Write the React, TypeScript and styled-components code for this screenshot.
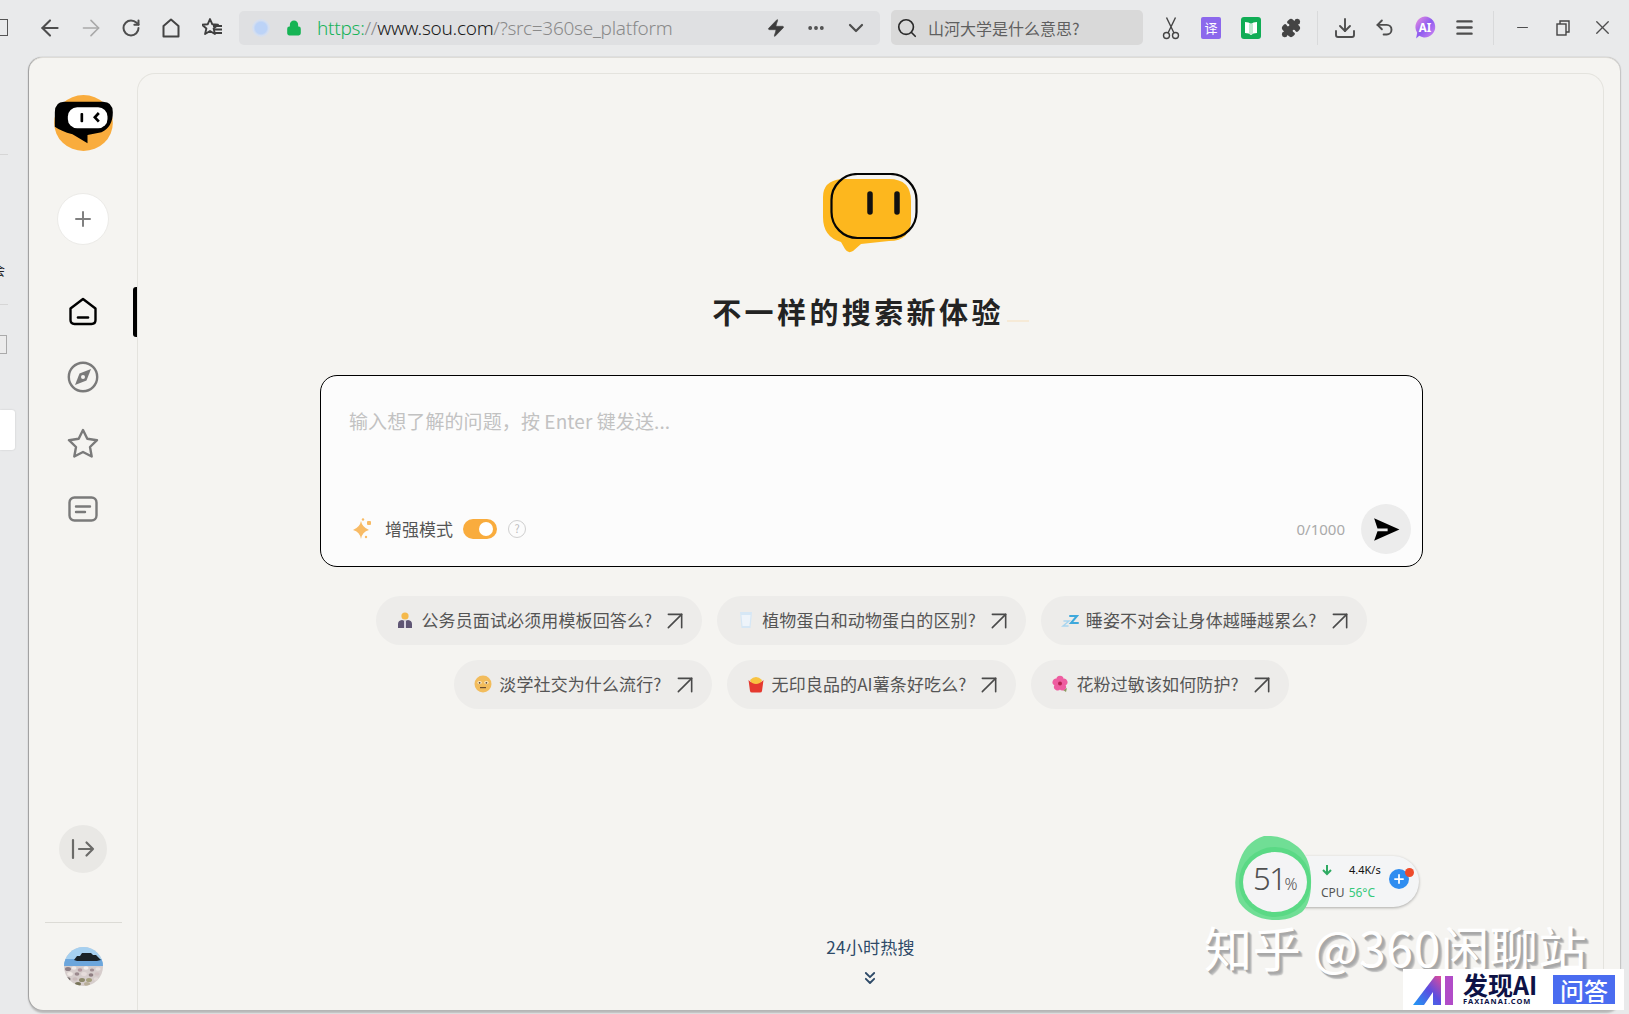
import React from "react";
import styled, { createGlobalStyle } from "styled-components";
import {
  ArrowLeft, ArrowRight, RotateCw, Download, Undo2, Menu, Minus, X, ChevronDown,
  MoreHorizontal, Search, ArrowUpRight, Plus, ChevronsDown, Lock, Zap, Puzzle,
} from "lucide-react";

const CJK = `"Noto Sans CJK SC", "Noto Sans", sans-serif`;

const Global = createGlobalStyle`
  html, body { margin: 0; padding: 0; height: 1014px; overflow: hidden; background: #e9eaeb; }
  #root { height: 1014px; }
  * { box-sizing: border-box; }
  body { font-family: ${CJK}; }
`;

const Page = styled.div`
  position: relative;
  width: 1629px;
  height: 1014px;
  display: flex;
  flex-direction: column;
  background: #e9eaeb;
  overflow: hidden;
`;

/* Toolbar */
const Toolbar = styled.header`
  height: 57px;
  display: flex;
  align-items: center;
  flex: none;
  padding-bottom: 2px;
`;
const CropEdge = styled.div`
  width: 30px;
  flex: none;
  display: flex;
  &::before {
    content: "";
    width: 7px;
    height: 15px;
    border: 1px solid #555;
    border-left: none;
  }
`;
const ToolIcon = styled.div<{ $c?: string }>`
  width: 40px;
  height: 40px;
  flex: none;
  display: flex;
  align-items: center;
  justify-content: center;
  color: ${(p) => p.$c || "#4e4e4e"};
`;
const NavIcon = styled(ToolIcon)`
  width: 40.4px;
`;
const AddressBar = styled.div`
  width: 641px;
  height: 34px;
  margin-left: 7px;
  flex: none;
  border-radius: 5px;
  background: #dfe0e2;
  display: flex;
  align-items: center;
  padding-left: 13px;
`;
const ShieldDot = styled.div`
  width: 18px;
  height: 18px;
  border-radius: 50%;
  background: radial-gradient(circle, #bcd3f7 0 45%, #d5dff0 60%, #dfe0e2 100%);
`;
const LockWrap = styled.div`
  margin-left: 16px;
  width: 16px;
  display: flex;
  color: #16b455;
`;
const Url = styled.div`
  margin-left: 15px;
  width: 398px;
  font-family: "Noto Sans", sans-serif;
  font-size: 19px;
  font-weight: 300;
  letter-spacing: -0.27px;
  white-space: nowrap;
  color: #8a8a8a;
  line-height: 34px;
`;
const UrlScheme = styled.span`
  color: #18b35a;
`;
const UrlHost = styled.span`
  color: #1a1a1a;
`;
const AddressTools = styled.div`
  display: flex;
  align-items: center;
  margin-left: auto;
  margin-right: 4px;
`;
const SearchBox = styled.div`
  width: 252px;
  height: 35px;
  margin-left: 11px;
  flex: none;
  border-radius: 5px;
  background: #d9d9d9;
  display: flex;
  align-items: center;
  padding-left: 5px;
  gap: 10px;
  color: #2a2a2a;
`;
const SearchText = styled.span`
  font-size: 16px;
  color: #5f5f5f;
  white-space: nowrap;
`;
const ToolGroup = styled.div`
  margin-left: 8px;
  display: flex;
  align-items: center;
`;
const ToolSep = styled.div<{ $w: number }>`
  width: ${(p) => p.$w}px;
  height: 34px;
  flex: none;
  display: flex;
  justify-content: center;
  &::before {
    content: "";
    width: 1px;
    background: #d9dadb;
  }
`;

/* Body */
const Workspace = styled.div`
  display: flex;
  flex: none;
  height: 953px;
`;
const Gutter = styled.div`
  width: 29px;
  flex: none;
  display: flex;
  flex-direction: column;
  overflow: hidden;
`;
const GutterRule = styled.div<{ $top: number }>`
  width: 8px;
  height: 1px;
  background: #d6d6d6;
  margin-top: ${(p) => p.$top}px;
`;
const GutterGlyph = styled.div`
  margin-top: 106px;
  margin-left: -8px;
  font-size: 13px;
  line-height: 18px;
  color: #222;
`;
const GutterBox = styled.div`
  margin-top: 30px;
  width: 7px;
  height: 19px;
  border: 1px solid #aaa;
  border-left: none;
  background: #ececec;
`;
const GutterPanel = styled.div`
  margin-top: 56px;
  width: 15px;
  height: 40px;
  background: #fff;
  border-radius: 0 3px 3px 0;
  box-shadow: 0 0 2px rgba(0, 0, 0, 0.15);
`;
const Card = styled.main`
  width: 1591px;
  height: 953px;
  flex: none;
  display: flex;
  background: #f5f4f1;
  border-radius: 14px;
  border-top: 1px solid #dedcd7;
  box-shadow: -1px 0 1px #9c9c9c, 1px 0 1px #c4c4c4, 0 3px 2px #b8b8b8;
`;
const Sidebar = styled.aside`
  width: 108px;
  flex: none;
  display: flex;
  flex-direction: column;
  align-items: center;
  padding: 37px 0 24px;
`;
const AddButton = styled.button`
  margin-top: 42px;
  width: 52px;
  height: 52px;
  border-radius: 50%;
  background: #fff;
  border: 1px solid #ecebe8;
  color: #808080;
  padding: 0;
  display: flex;
  align-items: center;
  justify-content: center;
`;
const NavList = styled.nav`
  margin-top: 42px;
  width: 100%;
  display: flex;
  flex-direction: column;
  gap: 16px;
`;
const NavItem = styled.div<{ $active?: boolean }>`
  position: relative;
  height: 50px;
  padding-bottom: 2px;
  display: flex;
  align-items: center;
  justify-content: center;
  color: ${(p) => (p.$active ? "#000" : "#7a7a7a")};
  ${(p) =>
    p.$active
      ? `&::after { content: ""; position: absolute; right: 0; top: 0; width: 4px; height: 50px; background: #000; border-radius: 3px 0 0 3px; }`
      : ""}
`;
const CollapseButton = styled.button`
  margin-top: auto;
  width: 48px;
  height: 48px;
  border-radius: 50%;
  border: none;
  padding: 0;
  background: #e9e8e5;
  display: flex;
  align-items: center;
  justify-content: center;
`;
const SideRule = styled.div`
  margin-top: 49px;
  width: 77px;
  height: 1px;
  background: #dcdbd6;
`;
const Avatar = styled.div`
  margin-top: 24px;
  width: 39px;
  height: 39px;
  border-radius: 50%;
  overflow: hidden;
  display: flex;
`;
const Panel = styled.section`
  margin: 15px 16px 0 0;
  flex: 1;
  display: flex;
  flex-direction: column;
  align-items: center;
  padding: 99px 0 22px;
  border: 1px solid #e4e3de;
  border-bottom: none;
  border-radius: 18px 18px 0 0;
  background: #f5f4f1;
`;
const Title = styled.h1`
  margin: 38px 0 0 0;
  height: 40px;
  display: flex;
  align-items: center;
  font-size: 29px;
  font-weight: 700;
  letter-spacing: 3.4px;
  color: #232323;
  white-space: nowrap;
`;
const TypingCursor = styled.span`
  width: 22px;
  height: 2px;
  margin: 20px 0 0 3px;
  background: #f6ead7;
`;
const InputCard = styled.div`
  margin: 44px 0 0 2px;
  width: 1103px;
  height: 192px;
  flex: none;
  border: 1px solid #000;
  border-radius: 17px;
  background: #fcfcfc;
  display: flex;
  flex-direction: column;
  justify-content: space-between;
  padding: 32px 11px 12px 28px;
`;
const Placeholder = styled.div`
  font-size: 19px;
  line-height: 26px;
  color: #c2c2c2;
  letter-spacing: 0.1px;
`;
const InputFooter = styled.div`
  display: flex;
  align-items: center;
`;
const SparkleWrap = styled.span`
  display: flex;
  margin-left: 3px;
`;
const ModeLabel = styled.span`
  margin: 0 0 2px 11px;
  font-size: 17px;
  color: #555;
  white-space: nowrap;
`;
const Toggle = styled.div`
  margin-left: 10px;
  width: 34px;
  height: 20px;
  border-radius: 10px;
  background: #f9ac3d;
  display: flex;
  align-items: center;
  justify-content: flex-end;
  padding-right: 4px;
  &::after {
    content: "";
    width: 14px;
    height: 14px;
    border-radius: 50%;
    background: #fff;
  }
`;
const HelpMark = styled.div`
  margin-left: 11px;
  width: 18px;
  height: 18px;
  border-radius: 50%;
  border: 1.5px solid #cfcfcf;
  color: #bdbdbd;
  font-size: 11px;
  line-height: 15px;
  text-align: center;
`;
const Counter = styled.span`
  margin-left: auto;
  font-family: "Noto Sans", sans-serif;
  font-size: 15px;
  color: #aaa;
`;
const SendButton = styled.button`
  margin-left: 16px;
  width: 50px;
  height: 50px;
  border-radius: 50%;
  border: none;
  padding: 0;
  background: #ececec;
  display: flex;
  align-items: center;
  justify-content: center;
`;
const ChipGrid = styled.div`
  margin: 29px 0 0 2px;
  width: 1010px;
  display: flex;
  flex-wrap: wrap;
  justify-content: center;
  gap: 15px;
`;
const Chip = styled.div`
  height: 49px;
  padding: 0 11px 2px 20px;
  border-radius: 25px;
  background: #edecea;
  display: flex;
  align-items: center;
  font-size: 17px;
  letter-spacing: 0.12px;
  color: #555;
  white-space: nowrap;
`;
const ChipEmoji = styled.span`
  width: 18px;
  height: 18px;
  flex: none;
  display: flex;
  margin-right: 7px;
`;
const ChipArrow = styled.span`
  margin: 2px 0 0 7px;
  display: flex;
  color: #4a4a4a;
`;
const HotLink = styled.div`
  margin-top: auto;
  display: flex;
  flex-direction: column;
  align-items: center;
  color: #2e4a68;
`;
const HotText = styled.span`
  font-size: 17px;
  line-height: 24px;
  letter-spacing: 0.3px;
`;
const HotChevron = styled.span`
  display: flex;
  margin-top: 9px;
`;

/* Floating overlays */
const Monitor = styled.div`
  position: absolute;
  left: 1234px;
  top: 836px;
  width: 185px;
  height: 84px;
`;
const MonitorPill = styled.div`
  position: absolute;
  left: 46px;
  top: 20px;
  width: 139px;
  height: 51px;
  border-radius: 26px;
  background: #f4f5f6;
  box-shadow: 0 1px 3px rgba(0, 0, 0, 0.3);
  padding: 2px 0 0 41px;
`;
const MonitorRow = styled.div`
  display: flex;
  align-items: center;
  height: 23px;
`;
const Speed = styled.span`
  margin-left: 16px;
  font-family: "Noto Sans", sans-serif;
  font-size: 11px;
  color: #111;
`;
const CpuLabel = styled.span`
  font-family: "Noto Sans", sans-serif;
  font-size: 12px;
  color: #555;
`;
const CpuValue = styled.span`
  margin-left: 4px;
  font-family: "Noto Sans", sans-serif;
  font-size: 12px;
  color: #35c97a;
`;
const BoostButton = styled.div`
  position: absolute;
  left: 155px;
  top: 33px;
  width: 20px;
  height: 20px;
  border-radius: 50%;
  background: #2f8df0;
  color: #fff;
  display: flex;
  align-items: center;
  justify-content: center;
  &::after {
    content: "";
    position: absolute;
    left: 16px;
    top: -1px;
    width: 9px;
    height: 9px;
    border-radius: 50%;
    background: #ee4b2b;
  }
`;
const Gauge = styled.div`
  position: absolute;
  left: 0;
  top: 0;
  width: 78px;
  height: 84px;
  display: flex;
`;
const GaugeText = styled.div`
  position: absolute;
  left: 19px;
  top: 24px;
  font-family: "Noto Sans", sans-serif;
  font-size: 31px;
  font-weight: 300;
  letter-spacing: -1.4px;
  line-height: 36px;
  color: #505050;
  white-space: nowrap;
`;
const GaugeUnit = styled.span`
  font-size: 16px;
  letter-spacing: 0;
  margin-left: -1px;
`;
const Watermark = styled.div`
  position: absolute;
  left: 1204px;
  top: 922px;
  font-size: 48px;
  line-height: 48px;
  letter-spacing: 0.7px;
  color: #fff;
  text-shadow: 2px 2px 0 #a8a8a8, 3px 3px 1px #b0b0b0, 4px 4px 1px #c4c4c4;
  white-space: nowrap;
`;
const BrandBadge = styled.div`
  position: absolute;
  left: 1403px;
  top: 969px;
  width: 221px;
  height: 41px;
  background: #fff;
  display: flex;
  align-items: center;
  padding-left: 10px;
`;
const BrandName = styled.div`
  margin: -2px 0 0 9px;
  width: 78px;
  display: flex;
  flex-direction: column;
  color: #0d1246;
`;
const BrandTitle = styled.span`
  font-size: 25px;
  font-weight: 700;
  line-height: 25px;
  white-space: nowrap;
`;
const BrandDomain = styled.span`
  font-family: "Noto Sans", sans-serif;
  font-size: 7.5px;
  font-weight: 700;
  line-height: 9px;
  letter-spacing: 1.05px;
  white-space: nowrap;
`;
const BrandTag = styled.div`
  margin-left: 12px;
  width: 62px;
  height: 29px;
  background: #4a6cf0;
  color: #fff;
  font-size: 24px;
  line-height: 29px;
  font-weight: 500;
  text-align: center;
  white-space: nowrap;
`;

const BotLogo = () => (
  <svg width="59" height="56" viewBox="0 0 176 168">
    <ellipse cx="88" cy="84" rx="88" ry="84" fill="#f9ac3d" />
    <path d="M30 20H146Q176 20 176 52Q176 96 142 112L100 120V145L55 118Q20 108 2 95V52Q2 20 30 20Z" fill="#000" />
    <rect x="41" y="37" width="119" height="63" rx="28" fill="#fff" />
    <rect x="79" y="54" width="8" height="28" rx="3" fill="#000" />
    <path d="M134 54L122 67L134 80" fill="none" stroke="#000" strokeWidth="8" />
  </svg>
);

const HomeIcon = () => (
  <svg width="30" height="30" viewBox="0 0 30 30" fill="none" stroke="currentColor" strokeWidth="2.4" strokeLinejoin="round" strokeLinecap="round">
    <path d="M2.5 12.5L15 3L27.5 12.5V24Q27.5 28 23.5 28H6.5Q2.5 28 2.5 24Z" />
    <path d="M10 21.5H20" strokeWidth="2.6" />
  </svg>
);
const CompassIcon = () => (
  <svg width="32" height="32" viewBox="0 0 32 32">
    <circle cx="16" cy="16" r="14.2" fill="none" stroke="currentColor" strokeWidth="2.4" />
    <path d="M24 8L19.5 19.5L8 24L12.5 12.5Z" fill="currentColor" />
    <circle cx="16" cy="16" r="2" fill="#f5f4f1" />
  </svg>
);
const StarIcon = () => (
  <svg width="32" height="30" viewBox="0 0 32 30" fill="none" stroke="currentColor" strokeWidth="2.4" strokeLinejoin="round">
    <path d="M16 2L20.3 10.8L30 12.2L23 19L24.7 28.5L16 24L7.3 28.5L9 19L2 12.2L11.7 10.8Z" />
  </svg>
);
const NoteIcon = () => (
  <svg width="30" height="26" viewBox="0 0 30 26" fill="none" stroke="currentColor" strokeWidth="2.4" strokeLinecap="round">
    <rect x="1.5" y="1.5" width="27" height="23" rx="5" />
    <path d="M8 10.5H22M8 16H17" />
  </svg>
);
const CollapseIcon = () => (
  <svg width="24" height="22" viewBox="0 0 24 22" fill="none" stroke="#6b6b68" strokeWidth="2.2" strokeLinecap="round" strokeLinejoin="round">
    <path d="M2 2V20M8 11H22M15.5 4.5L22 11L15.5 17.5" />
  </svg>
);
const pebbles: [number, number, number, string][] = [
  [4, 22, 3, "#8e7f84"], [10, 21, 2.5, "#efe9e6"], [16, 23, 2.4, "#b39aa0"], [22, 21, 2.6, "#f2eeec"],
  [28, 23, 2.2, "#a08e92"], [34, 22, 2.6, "#e9e1de"], [6, 27, 2.8, "#efe8e4"], [13, 27, 2.4, "#9b8a8e"],
  [20, 27, 2.8, "#e6dcdb"], [27, 28, 2.4, "#8f7e82"], [33, 27, 2.6, "#d2c2c2"], [4, 32, 2.6, "#77706e"],
  [11, 32, 2.6, "#cbbcbc"], [18, 33, 3, "#8e8a6c"], [25, 33, 3, "#a5a07e"], [32, 32, 2.4, "#e3dad8"],
  [14, 37, 3, "#777458"], [23, 37, 3, "#b8ae98"],
];
const AvatarArt = () => (
  <svg width="39" height="39" viewBox="0 0 39 39">
    <rect width="39" height="39" fill="#d6cdcc" />
    <rect width="39" height="19" fill="#a6d0f0" />
    <rect y="12" width="39" height="7" fill="#6ca6dc" />
    <path d="M10 13L13 9H16L18 6H27L29 8H32L37 13L33 14H13Z" fill="#1b2328" />
    {pebbles.map(([x, y, r, c]) => (
      <ellipse key={`${x}-${y}`} cx={x} cy={y} rx={r} ry={r * 0.7} fill={c} />
    ))}
  </svg>
);
const Mascot = () => (
  <svg width="95" height="80" viewBox="0 0 95 80">
    <path d="M18 6H66Q88 6 88 28V46Q88 68 66 68L38 71L30 78Q25 81 22 76L18 69Q0 64 0 44V24Q0 8 18 6Z" fill="#fdb71e" />
    <rect x="8.5" y="1" width="85" height="64" rx="26" fill="none" stroke="#050505" strokeWidth="2.2" />
    <path d="M47 21V39M74 21V39" stroke="#111" strokeWidth="5.5" strokeLinecap="round" />
  </svg>
);
const Sparkle = () => (
  <svg width="22" height="22" viewBox="0 0 22 22" fill="#f8bb65">
    <path d="M9 3Q10 9 17 12Q10 14 9 21Q8 14 1 12Q8 9 9 3Z" />
    <rect x="15" y="3" width="4" height="4" rx="1" />
    <circle cx="11" cy="1.5" r="1.2" />
    <circle cx="14" cy="19" r="1.2" />
  </svg>
);
const SendIcon = () => (
  <svg width="27" height="25" viewBox="0 0 24 22">
    <path d="M1 1L23.5 11L1 21L4 12.5H13V10H4Z" fill="#000" />
  </svg>
);
const CutIcon = () => (
  <svg width="18" height="24" viewBox="0 0 18 24" fill="none" stroke="#444" strokeWidth="1.4">
    <circle cx="4.5" cy="19.5" r="3" />
    <circle cx="13.5" cy="19.5" r="3" />
    <path d="M6 17L13.5 1.5M12 17L4.5 1.5" />
  </svg>
);
const TranslateIcon = () => (
  <svg width="20" height="22" viewBox="0 0 20 22">
    <rect width="20" height="22" rx="2" fill="#8c68ec" />
    <text x="10" y="16" fontSize="13" textAnchor="middle" fill="#fff" fontFamily={CJK}>译</text>
  </svg>
);
const BookIcon = () => (
  <svg width="20" height="22" viewBox="0 0 20 22">
    <rect width="20" height="22" rx="3" fill="#10ad55" />
    <path d="M4 5Q8 5 10 7Q12 5 16 5V16Q12 16 10 18Q8 16 4 16Z" fill="#fff" />
    <path d="M8 6.5H12V17H8Z" fill="#bfe9d0" />
  </svg>
);
const AiBubble = () => (
  <svg width="22" height="23" viewBox="0 0 21 22">
    <defs>
      <linearGradient id="aib" x1="0" y1="0" x2="1" y2="1">
        <stop offset="0" stopColor="#f090e0" />
        <stop offset="0.5" stopColor="#8d5cf0" />
        <stop offset="1" stopColor="#d78bf0" />
      </linearGradient>
    </defs>
    <path d="M10.5 0.5A10 10 0 1 1 5 19L2 21.5L3 16A10 10 0 0 1 10.5 0.5Z" fill="url(#aib)" />
    <text x="10.5" y="15" fontSize="11" fontWeight="700" textAnchor="middle" fill="#fff" fontFamily='"Noto Sans", sans-serif'>AI</text>
  </svg>
);
const StarList = () => (
  <svg width="20" height="20" viewBox="0 0 20 20" fill="#3f3f3f">
    <path d="M8 1L10.2 6.2L16 6.7L11.6 10.4L12.9 16L8 13L3.1 16L4.4 10.4L0 6.7L5.8 6.2Z" fill="none" stroke="#3f3f3f" strokeWidth="1.9" strokeLinejoin="round" />
    <rect x="11" y="7" width="9" height="2" />
    <rect x="12" y="10.5" width="8" height="2" />
    <rect x="13" y="14" width="7" height="2" />
  </svg>
);
const HomeOutline = () => (
  <svg width="18" height="20" viewBox="0 0 18 20" fill="none" stroke="#444" strokeWidth="2" strokeLinejoin="round">
    <path d="M1.5 8L9 1.5L16.5 8V18.5H1.5Z" />
  </svg>
);
const Restore = () => (
  <svg width="14" height="16" viewBox="0 0 14 16" fill="none" stroke="#444" strokeWidth="1.4">
    <rect x="1" y="4" width="9" height="11" />
    <path d="M4 4V1H13V12H10" />
  </svg>
);
const PersonEmoji = () => (
  <svg viewBox="0 0 18 18" width="18" height="18">
    <circle cx="9" cy="5" r="3.6" fill="#f5b94b" />
    <path d="M2 17V13Q2 9.5 6 9L9 10L12 9Q16 9.5 16 13V17Z" fill="#5f5674" />
    <path d="M8 10H10V17H8Z" fill="#d8d4e2" />
  </svg>
);
const GlassEmoji = () => (
  <svg viewBox="0 0 18 18" width="18" height="18">
    <path d="M3 1H15L13.5 17H4.5Z" fill="#d6e7f5" />
    <path d="M4.5 4H13.5L12.5 15H5.5Z" fill="#eef4fa" />
  </svg>
);
const ZzzEmoji = () => (
  <svg viewBox="0 0 18 18" width="18" height="18" fill="none" strokeLinecap="round">
    <path d="M9 5H16L10 12H17" stroke="#3fa9dc" strokeWidth="2" />
    <path d="M3 10H8L2 15H7" stroke="#a9d5ef" strokeWidth="1.5" />
  </svg>
);
const FaceEmoji = () => (
  <svg viewBox="0 0 18 18" width="18" height="18">
    <circle cx="9" cy="9" r="8.5" fill="#f2bc5c" />
    <ellipse cx="5.6" cy="7.6" rx="2.2" ry="1.6" fill="#fbe8c0" />
    <ellipse cx="12.4" cy="7.6" rx="2.2" ry="1.6" fill="#fbe8c0" />
    <circle cx="5.6" cy="7.8" r="0.9" fill="#5a4330" />
    <circle cx="12.4" cy="7.8" r="0.9" fill="#5a4330" />
    <rect x="6" y="12" width="6" height="1.2" fill="#6b4d2e" />
  </svg>
);
const FriesEmoji = () => (
  <svg viewBox="0 0 18 18" width="18" height="18">
    <path d="M3 5Q9 -1 15 5L13.5 9H4.5Z" fill="#f8c341" />
    <path d="M1.5 5Q9 13 16.5 5L15 16Q14.8 17.5 13 17.5H5Q3.2 17.5 3 16Z" fill="#e5392f" />
  </svg>
);
const FlowerEmoji = () => (
  <svg viewBox="0 0 18 18" width="18" height="18">
    <path d="M12 15L16 13L15 17Z" fill="#8c9a63" />
    {[0, 72, 144, 216, 288].map((a) => (
      <circle key={a} cx="9" cy="4.4" r="3.6" fill="#ee5da0" transform={`rotate(${a} 9 8.5)`} />
    ))}
    <circle cx="9" cy="8.5" r="2" fill="#b5224f" />
  </svg>
);
const GaugeArt = () => (
  <svg width="78" height="84" viewBox="0 0 78 84">
    <path d="M30 0Q48 -1 60 8Q76 18 77 42Q78 66 68 76Q56 85 38 84Q16 82 5 66Q-2 48 4 30Q10 6 30 0Z" fill="#70de95" />
    <ellipse cx="41" cy="46" rx="36" ry="35" fill="#5ad985" />
    <ellipse cx="41" cy="46" rx="32" ry="30" fill="#f4f4f5" />
  </svg>
);
const AiMark = () => (
  <svg width="41" height="32" viewBox="0 0 41 32">
    <defs>
      <linearGradient id="aim" x1="0" y1="1" x2="1" y2="0">
        <stop offset="0" stopColor="#1e9bf5" />
        <stop offset="0.55" stopColor="#5c4ce0" />
        <stop offset="1" stopColor="#e04b9a" />
      </linearGradient>
    </defs>
    <path d="M0 31L22 2H28V31H20V18L11 31Z" fill="url(#aim)" />
    <rect x="32" y="2" width="8" height="29" fill="#b14cc8" />
  </svg>
);

const chips = [
  { e: <PersonEmoji />, t: "公务员面试必须用模板回答么?" },
  { e: <GlassEmoji />, t: "植物蛋白和动物蛋白的区别?" },
  { e: <ZzzEmoji />, t: "睡姿不对会让身体越睡越累么?" },
  { e: <FaceEmoji />, t: "淡学社交为什么流行?" },
  { e: <FriesEmoji />, t: "无印良品的AI薯条好吃么?" },
  { e: <FlowerEmoji />, t: "花粉过敏该如何防护?" },
];

export default function App() {
  return (
    <Page>
      <Global />
      <Toolbar>
        <CropEdge />
        <NavIcon><ArrowLeft size={26} strokeWidth={1.9} /></NavIcon>
        <NavIcon $c="#a9a9a9"><ArrowRight size={26} strokeWidth={1.5} /></NavIcon>
        <NavIcon><RotateCw size={20} strokeWidth={2.4} /></NavIcon>
        <NavIcon><HomeOutline /></NavIcon>
        <NavIcon><StarList /></NavIcon>
        <AddressBar>
          <ShieldDot />
          <LockWrap><Lock size={16} fill="currentColor" strokeWidth={2.4} /></LockWrap>
          <Url>
            <UrlScheme>https:</UrlScheme>//<UrlHost>www.sou.com</UrlHost>/?src=360se_platform
          </Url>
          <AddressTools>
            <ToolIcon><Zap size={20} fill="#3c3c3c" strokeWidth={1} /></ToolIcon>
            <ToolIcon><MoreHorizontal size={20} strokeWidth={2.6} /></ToolIcon>
            <ToolIcon><ChevronDown size={24} strokeWidth={2.2} /></ToolIcon>
          </AddressTools>
        </AddressBar>
        <SearchBox>
          <Search size={22} strokeWidth={1.8} />
          <SearchText>山河大学是什么意思?</SearchText>
        </SearchBox>
        <ToolGroup>
          <ToolIcon><CutIcon /></ToolIcon>
          <ToolIcon><TranslateIcon /></ToolIcon>
          <ToolIcon><BookIcon /></ToolIcon>
          <ToolIcon><Puzzle size={20} fill="#444" color="#444" /></ToolIcon>
          <ToolSep $w={14} />
          <ToolIcon><Download size={24} strokeWidth={1.9} /></ToolIcon>
          <ToolIcon><Undo2 size={21} strokeWidth={2.2} /></ToolIcon>
          <ToolIcon><AiBubble /></ToolIcon>
          <ToolIcon><Menu size={21} strokeWidth={2.8} /></ToolIcon>
          <ToolSep $w={18} />
          <ToolIcon><Minus size={17} strokeWidth={1.6} /></ToolIcon>
          <ToolIcon><Restore /></ToolIcon>
          <ToolIcon><X size={23} strokeWidth={1.4} /></ToolIcon>
        </ToolGroup>
      </Toolbar>

      <Workspace>
        <Gutter>
          <GutterRule $top={97} />
          <GutterGlyph>会</GutterGlyph>
          <GutterRule $top={25} />
          <GutterBox />
          <GutterPanel />
        </Gutter>
        <Card>
          <Sidebar>
            <BotLogo />
            <AddButton><Plus size={24} strokeWidth={2} /></AddButton>
            <NavList>
              <NavItem $active><HomeIcon /></NavItem>
              <NavItem><CompassIcon /></NavItem>
              <NavItem><StarIcon /></NavItem>
              <NavItem><NoteIcon /></NavItem>
            </NavList>
            <CollapseButton><CollapseIcon /></CollapseButton>
            <SideRule />
            <Avatar><AvatarArt /></Avatar>
          </Sidebar>
          <Panel>
            <Mascot />
            <Title>
              不一样的搜索新体验
              <TypingCursor />
            </Title>
            <InputCard>
              <Placeholder>{"输入想了解的问题\uFF0C按 Enter 键发送..."}</Placeholder>
              <InputFooter>
                <SparkleWrap><Sparkle /></SparkleWrap>
                <ModeLabel>增强模式</ModeLabel>
                <Toggle />
                <HelpMark>?</HelpMark>
                <Counter>0/1000</Counter>
                <SendButton><SendIcon /></SendButton>
              </InputFooter>
            </InputCard>
            <ChipGrid>
              {chips.map((c) => (
                <Chip key={c.t}>
                  <ChipEmoji>{c.e}</ChipEmoji>
                  {c.t}
                  <ChipArrow><ArrowUpRight size={32} strokeWidth={1.2} /></ChipArrow>
                </Chip>
              ))}
            </ChipGrid>
            <HotLink>
              <HotText>24小时热搜</HotText>
              <HotChevron><ChevronsDown size={20} strokeWidth={2.2} /></HotChevron>
            </HotLink>
          </Panel>
        </Card>
      </Workspace>

      <Monitor>
        <MonitorPill>
          <MonitorRow>
            <svg width="12" height="12" viewBox="0 0 12 12" fill="none" stroke="#2eaa62" strokeWidth="2">
              <path d="M6 1V10M2 6L6 10L10 6" />
            </svg>
            <Speed>4.4K/s</Speed>
          </MonitorRow>
          <MonitorRow>
            <CpuLabel>CPU</CpuLabel>
            <CpuValue>56°C</CpuValue>
          </MonitorRow>
        </MonitorPill>
        <BoostButton><Plus size={14} strokeWidth={3} /></BoostButton>
        <Gauge>
          <GaugeArt />
          <GaugeText>51<GaugeUnit>%</GaugeUnit></GaugeText>
        </Gauge>
      </Monitor>
      <Watermark>知乎 @360闲聊站</Watermark>
      <BrandBadge>
        <AiMark />
        <BrandName>
          <BrandTitle>发现AI</BrandTitle>
          <BrandDomain>FAXIANAI.COM</BrandDomain>
        </BrandName>
        <BrandTag>问答</BrandTag>
      </BrandBadge>
    </Page>
  );
}
